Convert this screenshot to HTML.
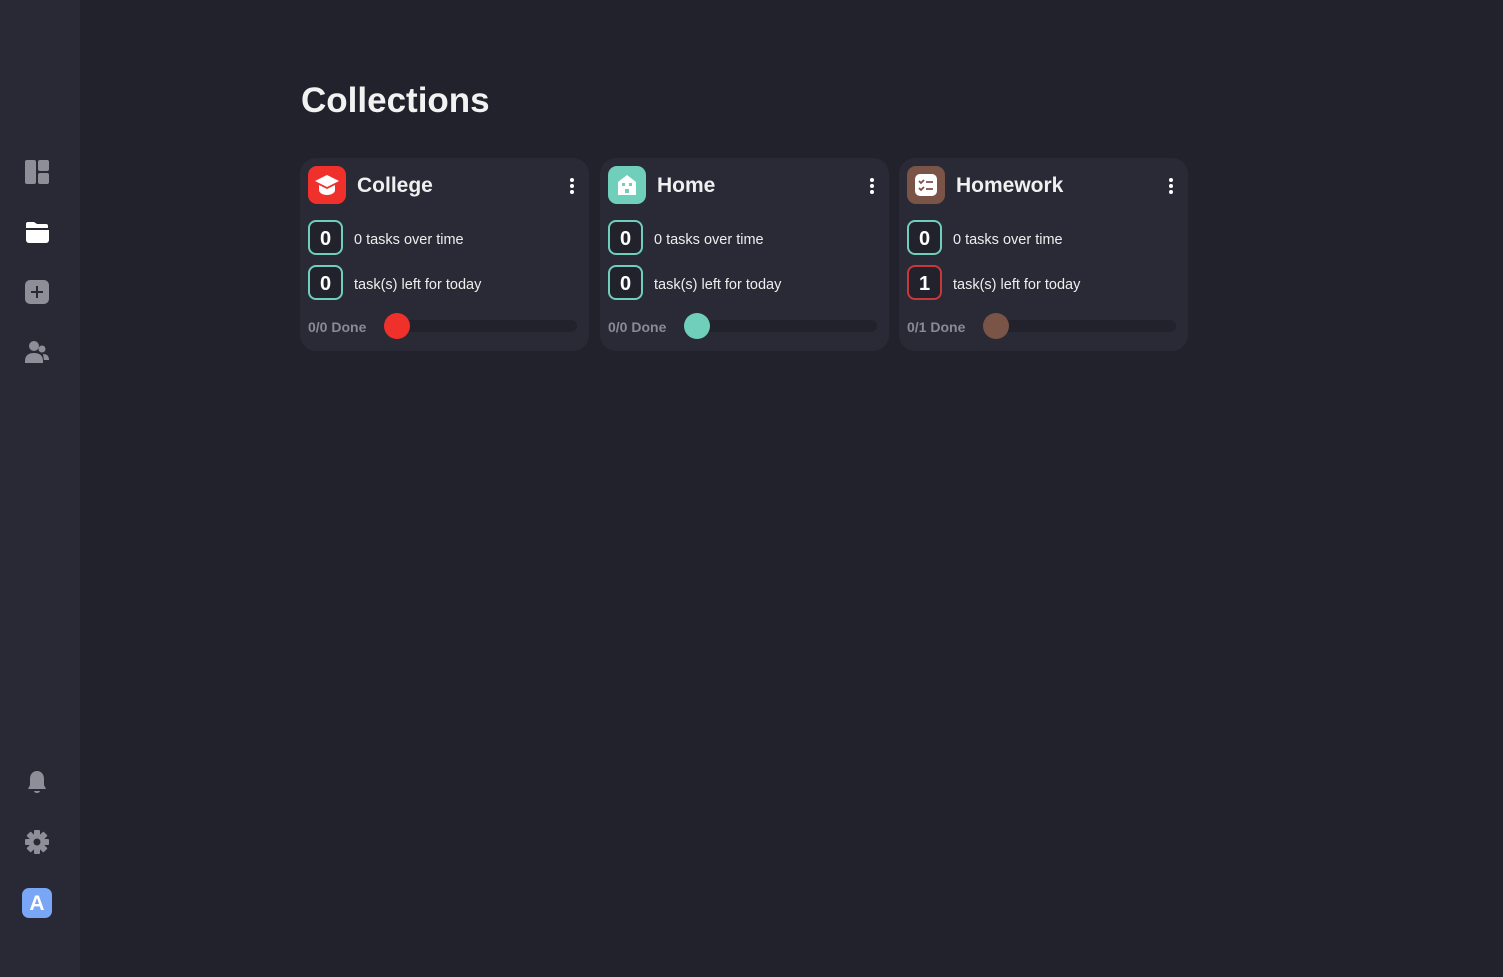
<!DOCTYPE html>
<html><head><meta charset="utf-8"><style>
*{box-sizing:border-box;margin:0;padding:0}
body{width:1503px;height:977px;background:#22222c;font-family:"Liberation Sans",sans-serif;position:relative;overflow:hidden;color:#fff}
.side{position:absolute;left:0;top:0;width:80px;height:977px;background:#292936}
.ic{position:absolute;left:25px;width:24px;height:24px}
h1{position:absolute;left:301px;top:81px;font-size:35px;font-weight:bold;color:#f2f2f2}
.card{position:absolute;top:158px;width:289px;height:193px;background:#2a2a36;border-radius:16px}
.logo{position:absolute;left:8px;top:8px;width:38px;height:38px;border-radius:9px}
.title{position:absolute;left:57px;top:16px;font-size:21px;font-weight:bold;color:#f0f0f0}
.dots{position:absolute;left:270px;top:20px;width:4px}
.dots i{display:block;width:4px;height:4px;border-radius:2px;background:#fff;margin-bottom:2px}
.box{position:absolute;left:8px;width:35px;height:35px;border:2px solid #6fcfbb;border-radius:8px;background:#22222c;font-size:20px;font-weight:bold;text-align:center;line-height:34px}
.txt{position:absolute;left:54px;font-size:14.5px;color:#eee}
.done{position:absolute;left:8px;top:161px;font-size:14px;font-weight:bold;color:#8a8a96}
.track{position:absolute;left:88px;top:162px;width:189px;height:12px;border-radius:6px;background:#22222c}
.dot{position:absolute;left:84px;top:155px;width:26px;height:26px;border-radius:13px}
</style></head><body>
<div class="side">
<svg class="ic" style="top:160px" viewBox="0 0 24 24"><rect x="0" y="0" width="11" height="24" rx="2" fill="#8e8e98"/><rect x="13" y="0" width="11" height="11" rx="2" fill="#8e8e98"/><rect x="13" y="13" width="11" height="11" rx="2" fill="#8e8e98"/></svg>
<svg class="ic" style="top:220px" viewBox="0 0 24 24"><path d="M1 4a2 2 0 0 1 2-2h6l3 2h9a2 2 0 0 1 2 2v2H1z" fill="#fff"/><path d="M1 10h23v10a3 3 0 0 1-3 3H4a3 3 0 0 1-3-3z" fill="#fff"/></svg>
<svg class="ic" style="top:280px" viewBox="0 0 24 24"><rect x="0" y="0" width="24" height="24" rx="5" fill="#8e8e98"/><path d="M12 6v12M6 12h12" stroke="#292936" stroke-width="2"/></svg>
<svg class="ic" style="top:340px" viewBox="0 0 24 24"><circle cx="9" cy="6" r="5" fill="#8e8e98"/><circle cx="17" cy="9" r="3.5" fill="#8e8e98"/><path d="M0 21c0-6 4-8 9-8s9 2 9 8v2H0z" fill="#8e8e98"/><path d="M18 14c4 0 6 2 6 6h-5z" fill="#8e8e98"/></svg>
<svg class="ic" style="top:770px" viewBox="0 0 24 24"><path d="M12 1c-4 0-7 3-7 8v6l-2 4h18l-2-4V9c0-5-3-8-7-8z" fill="#8e8e98"/><path d="M9 21h6a3 2 0 0 1-6 0z" fill="#8e8e98"/></svg>
<svg class="ic" style="top:830px" viewBox="0 0 24 24"><g fill="#8e8e98"><circle cx="12" cy="12" r="8"/><rect x="9" y="0" width="6" height="6" rx="1"/><rect x="9" y="18" width="6" height="6" rx="1"/><rect x="0" y="9" width="6" height="6" rx="1"/><rect x="18" y="9" width="6" height="6" rx="1"/><rect x="9" y="0" width="6" height="6" rx="1" transform="rotate(45 12 12)"/><rect x="9" y="18" width="6" height="6" rx="1" transform="rotate(45 12 12)"/><rect x="0" y="9" width="6" height="6" rx="1" transform="rotate(45 12 12)"/><rect x="18" y="9" width="6" height="6" rx="1" transform="rotate(45 12 12)"/></g><circle cx="12" cy="12" r="3.5" fill="#292936"/></svg>
<div style="position:absolute;left:22px;top:888px;width:30px;height:30px;border-radius:7px;background:#7aa7f5;color:#fff;font-weight:bold;font-size:21px;text-align:center;line-height:32px">A</div>
</div>
<h1>Collections</h1>

<div class="card" style="left:300px">
<div class="logo" style="background:#f0302a"><svg width="38" height="38" viewBox="0 0 38 38"><path d="M19 9l12 6-12 6-12-6z" fill="#fff"/><path d="M11 19v5c0 3 4 5 8 5s8-2 8-5v-5l-8 4z" fill="#fff"/></svg></div>
<div class="title">College</div><div class="dots"><i></i><i></i><i></i></div>
<div class="box" style="top:62px">0</div><div class="txt" style="top:74px">0 tasks over time</div>
<div class="box" style="top:107px">0</div><div class="txt" style="top:119px">task(s) left for today</div>
<div class="done">0/0 Done</div><div class="track"></div><div class="dot" style="background:#f0302a"></div>
</div>

<div class="card" style="left:600px">
<div class="logo" style="background:#6fcfbb"><svg width="38" height="38" viewBox="0 0 38 38"><path d="M10 16l9-7 9 7v13H10z" fill="#fff"/><rect x="14" y="17" width="3" height="3" fill="#6fcfbb"/><rect x="21" y="17" width="3" height="3" fill="#6fcfbb"/><rect x="17" y="23" width="4" height="4" fill="#6fcfbb"/></svg></div>
<div class="title">Home</div><div class="dots"><i></i><i></i><i></i></div>
<div class="box" style="top:62px">0</div><div class="txt" style="top:74px">0 tasks over time</div>
<div class="box" style="top:107px">0</div><div class="txt" style="top:119px">task(s) left for today</div>
<div class="done">0/0 Done</div><div class="track"></div><div class="dot" style="background:#6fcfbb"></div>
</div>

<div class="card" style="left:899px">
<div class="logo" style="background:#7a5446"><svg width="38" height="38" viewBox="0 0 38 38"><rect x="8" y="8" width="22" height="22" rx="5" fill="#fff"/><path d="M12 15l2 2 3-3M12 22l2 2 3-3M19 16h7M19 23h7" stroke="#7a5446" stroke-width="1.8" fill="none"/></svg></div>
<div class="title">Homework</div><div class="dots"><i></i><i></i><i></i></div>
<div class="box" style="top:62px">0</div><div class="txt" style="top:74px">0 tasks over time</div>
<div class="box" style="top:107px;border-color:#c8383a">1</div><div class="txt" style="top:119px">task(s) left for today</div>
<div class="done">0/1 Done</div><div class="track"></div><div class="dot" style="background:#7a5446"></div>
</div>
</body></html>
